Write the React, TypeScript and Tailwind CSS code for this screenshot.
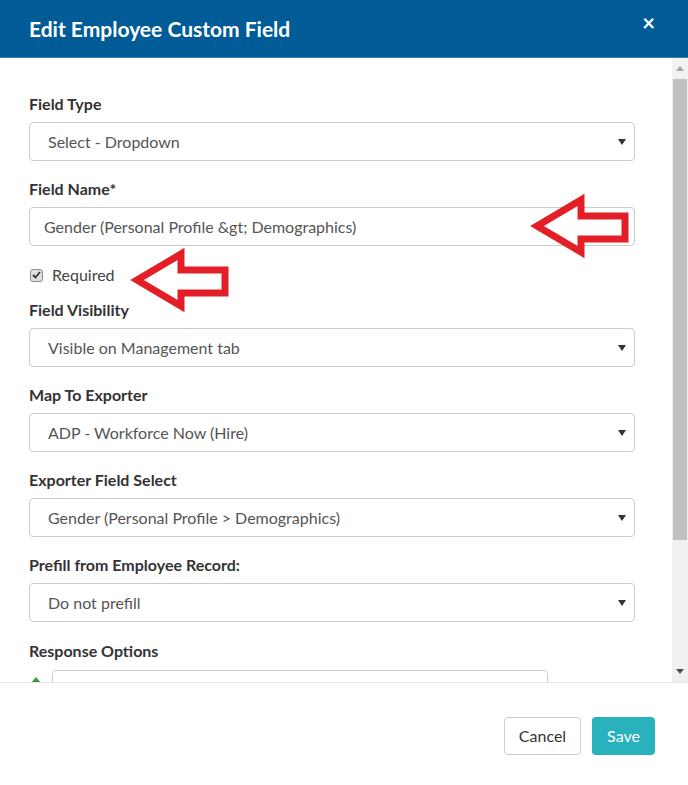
import React from "react";

const font = { fontFamily: "Lato, 'Open Sans', sans-serif" };

function Caret() {
  return (
    <svg width="8" height="6" viewBox="0 0 8 6" className="shrink-0">
      <path d="M0 0 L8 0 L4 6 Z" fill="#333" />
    </svg>
  );
}

function SelectBox({ value }: { value: string }) {
  return (
    <div className="flex h-[39px] items-center justify-between rounded-[4px] border border-[#cccccc] bg-white pl-[18px] pr-[8px] text-[16px] text-[#555]">
      <span>{value}</span>
      <Caret />
    </div>
  );
}

function Label({ children }: { children: React.ReactNode }) {
  return <div className="h-[22px] text-[16px] font-bold leading-[22px] text-[#333]">{children}</div>;
}

function Arrow({ left, top }: { left: number; top: number }) {
  return (
    <svg
      width="100"
      height="66"
      viewBox="0 0 100 66"
      className="absolute"
      style={{ left, top }}
    >
      <path
        d="M7 33 L51 7 L51 23 L95 23 L95 46 L51 46 L51 59 Z"
        fill="white"
        stroke="#e41e26"
        strokeWidth="7"
        strokeLinejoin="miter"
        strokeMiterlimit="10"
      />
    </svg>
  );
}

export default function App() {
  return (
    <div className="relative flex h-[785px] w-[688px] flex-col overflow-hidden bg-white" style={font}>
      {/* Header */}
      <div className="flex h-[58px] shrink-0 items-center justify-between border-b border-[#3a7fb0] bg-[#005b96] pl-[29px] pr-[33px]">
        <div className="text-[21px] font-bold text-white">Edit Employee Custom Field</div>
        <div className="-mt-[12px] text-[22px] font-bold leading-none text-white">×</div>
      </div>

      {/* Body */}
      <div className="flex h-[624px] shrink-0 overflow-hidden">
        <div className="flex-1 overflow-hidden pl-[29px] pr-[37px] pt-[35px]">
          <Label>Field Type</Label>
          <div className="mt-[7px]">
            <SelectBox value="Select - Dropdown" />
          </div>

          <div className="mt-[17px]">
            <Label>Field Name*</Label>
          </div>
          <div className="mt-[7px] flex h-[39px] items-center rounded-[4px] border border-[#cccccc] bg-white pl-[14px] text-[16px] text-[#555]">
            Gender (Personal Profile &amp;gt; Demographics)
          </div>

          <div className="mt-[18px] flex h-[22px] items-center">
            <div className="ml-[1px] flex h-[13px] w-[13px] items-center justify-center rounded-[3px] border border-[#8f8f8f] bg-[#e0e0e0]">
              <svg width="9" height="8" viewBox="0 0 9 8">
                <path d="M1 4 L3.5 6.5 L8 1" fill="none" stroke="#333" strokeWidth="1.8" />
              </svg>
            </div>
            <span className="ml-[9px] text-[16px] text-[#444]">Required</span>
          </div>

          <div className="mt-[13px]">
            <Label>Field Visibility</Label>
          </div>
          <div className="mt-[7px]">
            <SelectBox value="Visible on Management tab" />
          </div>

          <div className="mt-[17px]">
            <Label>Map To Exporter</Label>
          </div>
          <div className="mt-[7px]">
            <SelectBox value="ADP - Workforce Now (Hire)" />
          </div>

          <div className="mt-[17px]">
            <Label>Exporter Field Select</Label>
          </div>
          <div className="mt-[7px]">
            <SelectBox value="Gender (Personal Profile > Demographics)" />
          </div>

          <div className="mt-[17px]">
            <Label>Prefill from Employee Record:</Label>
          </div>
          <div className="mt-[7px]">
            <SelectBox value="Do not prefill" />
          </div>

          <div className="mt-[18px]">
            <Label>Response Options</Label>
          </div>
          <div className="mt-[8px] flex items-start">
            <div className="mt-[7px] ml-[1px] h-0 w-0 border-x-[6px] border-b-[7px] border-x-transparent border-b-[#3a9a3a]" />
            <div className="ml-[10px] h-[40px] w-[496px] rounded-[4px] border border-[#cccccc]" />
          </div>
        </div>

        {/* Scrollbar */}
        <div className="flex w-[16px] shrink-0 flex-col items-center bg-[#f1f1f1]">
          <div className="flex h-[21px] items-center justify-center">
            <svg width="8" height="5" viewBox="0 0 8 5">
              <path d="M0 5 L8 5 L4 0 Z" fill="#a3a3a3" />
            </svg>
          </div>
          <div className="h-[461px] w-[14px] bg-[#c1c1c1]" />
          <div className="flex-1" />
          <div className="flex h-[21px] items-center justify-center">
            <svg width="8" height="5" viewBox="0 0 8 5">
              <path d="M0 0 L8 0 L4 5 Z" fill="#505050" />
            </svg>
          </div>
        </div>
      </div>

      {/* Footer */}
      <div className="flex flex-1 items-center justify-end gap-[11px] border-t border-[#e5e5e5] pr-[33px] pt-[4px]">
        <button className="h-[38px] w-[77px] rounded-[4px] border border-[#cccccc] bg-white text-[16px] text-[#333]">
          Cancel
        </button>
        <button className="h-[38px] w-[63px] rounded-[4px] bg-[#2ab1be] text-[16px] text-white">
          Save
        </button>
      </div>

      <Arrow left={530} top={193} />
      <Arrow left={130} top={247} />
    </div>
  );
}
